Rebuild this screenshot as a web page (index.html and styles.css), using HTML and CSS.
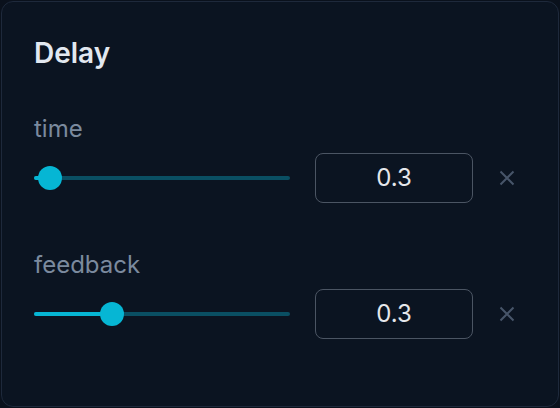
FILE: index.html
```html
<!DOCTYPE html>
<html>

<head>
	<title>Delay</title>
	<meta charset="utf-8" />
	<link rel="stylesheet" href="styles.css">
</head>

<body>
	<div class="card">
		<h2 class="title">Delay</h2>
		<div class="param">
			<p class="label">time</p>
			<div class="row">
				<div class="slider">
					<div class="track"></div>
					<div class="fill" style="width: 16px"></div>
					<div class="thumb" style="left: 16px"></div>
				</div>
				<div class="value">0.3</div>
				<button class="clear" type="button" title="reset">
					<svg viewBox="0 0 16 16" width="16" height="16">
						<path d="M1.5 1.5 L14.5 14.5 M14.5 1.5 L1.5 14.5" />
					</svg>
				</button>
			</div>
		</div>
		<div class="param">
			<p class="label">feedback</p>
			<div class="row">
				<div class="slider">
					<div class="track"></div>
					<div class="fill" style="width: 78px"></div>
					<div class="thumb" style="left: 78px"></div>
				</div>
				<div class="value">0.3</div>
				<button class="clear" type="button" title="reset">
					<svg viewBox="0 0 16 16" width="16" height="16">
						<path d="M1.5 1.5 L14.5 14.5 M14.5 1.5 L1.5 14.5" />
					</svg>
				</button>
			</div>
		</div>
	</div>
</body>

</html>
```

FILE: styles.css
```css
/* general styles */
* {
	box-sizing: border-box;
}

html,
body {
	height: 100%;
}

body {
	margin: 0;
	padding: 1px;
	background-color: #0a111c;
	font-family: Inter, "Noto Sans", sans-serif;
}

.card {
	height: 100%;
	padding: 34px 32px 0 32px;
	border: 1px solid #1e293b;
	border-radius: 12px;
	background-color: #0b1421;
}

.title {
	margin: 0 0 45px 0;
	font-size: 28px;
	line-height: 34px;
	font-weight: 600;
	color: #e2e8f0;
}

/* parameters */
.param {
	margin-bottom: 48px;
}

.label {
	margin: 0 0 10px 0;
	font-size: 24px;
	line-height: 28px;
	color: #7b8a9e;
}

.row {
	display: flex;
	align-items: center;
	height: 50px;
}

.slider {
	position: relative;
	width: 256px;
	height: 24px;
}

.track,
.fill {
	position: absolute;
	left: 0;
	top: 10px;
	height: 4px;
	border-radius: 2px;
}

.track {
	width: 100%;
	background-color: #0a4f63;
}

.fill {
	background-color: #06b6d4;
}

.thumb {
	position: absolute;
	top: 0;
	width: 24px;
	height: 24px;
	margin-left: -12px;
	border-radius: 50%;
	background-color: #06b6d4;
}

.value {
	width: 158px;
	height: 50px;
	margin-left: 25px;
	border: 1.5px solid #4b5563;
	border-radius: 8px;
	font-size: 24px;
	line-height: 47px;
	text-align: center;
	color: #e5e7eb;
}

.clear {
	display: flex;
	margin-left: 26px;
	padding: 0;
	border: 0;
	background: none;
	cursor: pointer;
}

.clear svg {
	fill: none;
	stroke: #475569;
	stroke-width: 2;
}
```
